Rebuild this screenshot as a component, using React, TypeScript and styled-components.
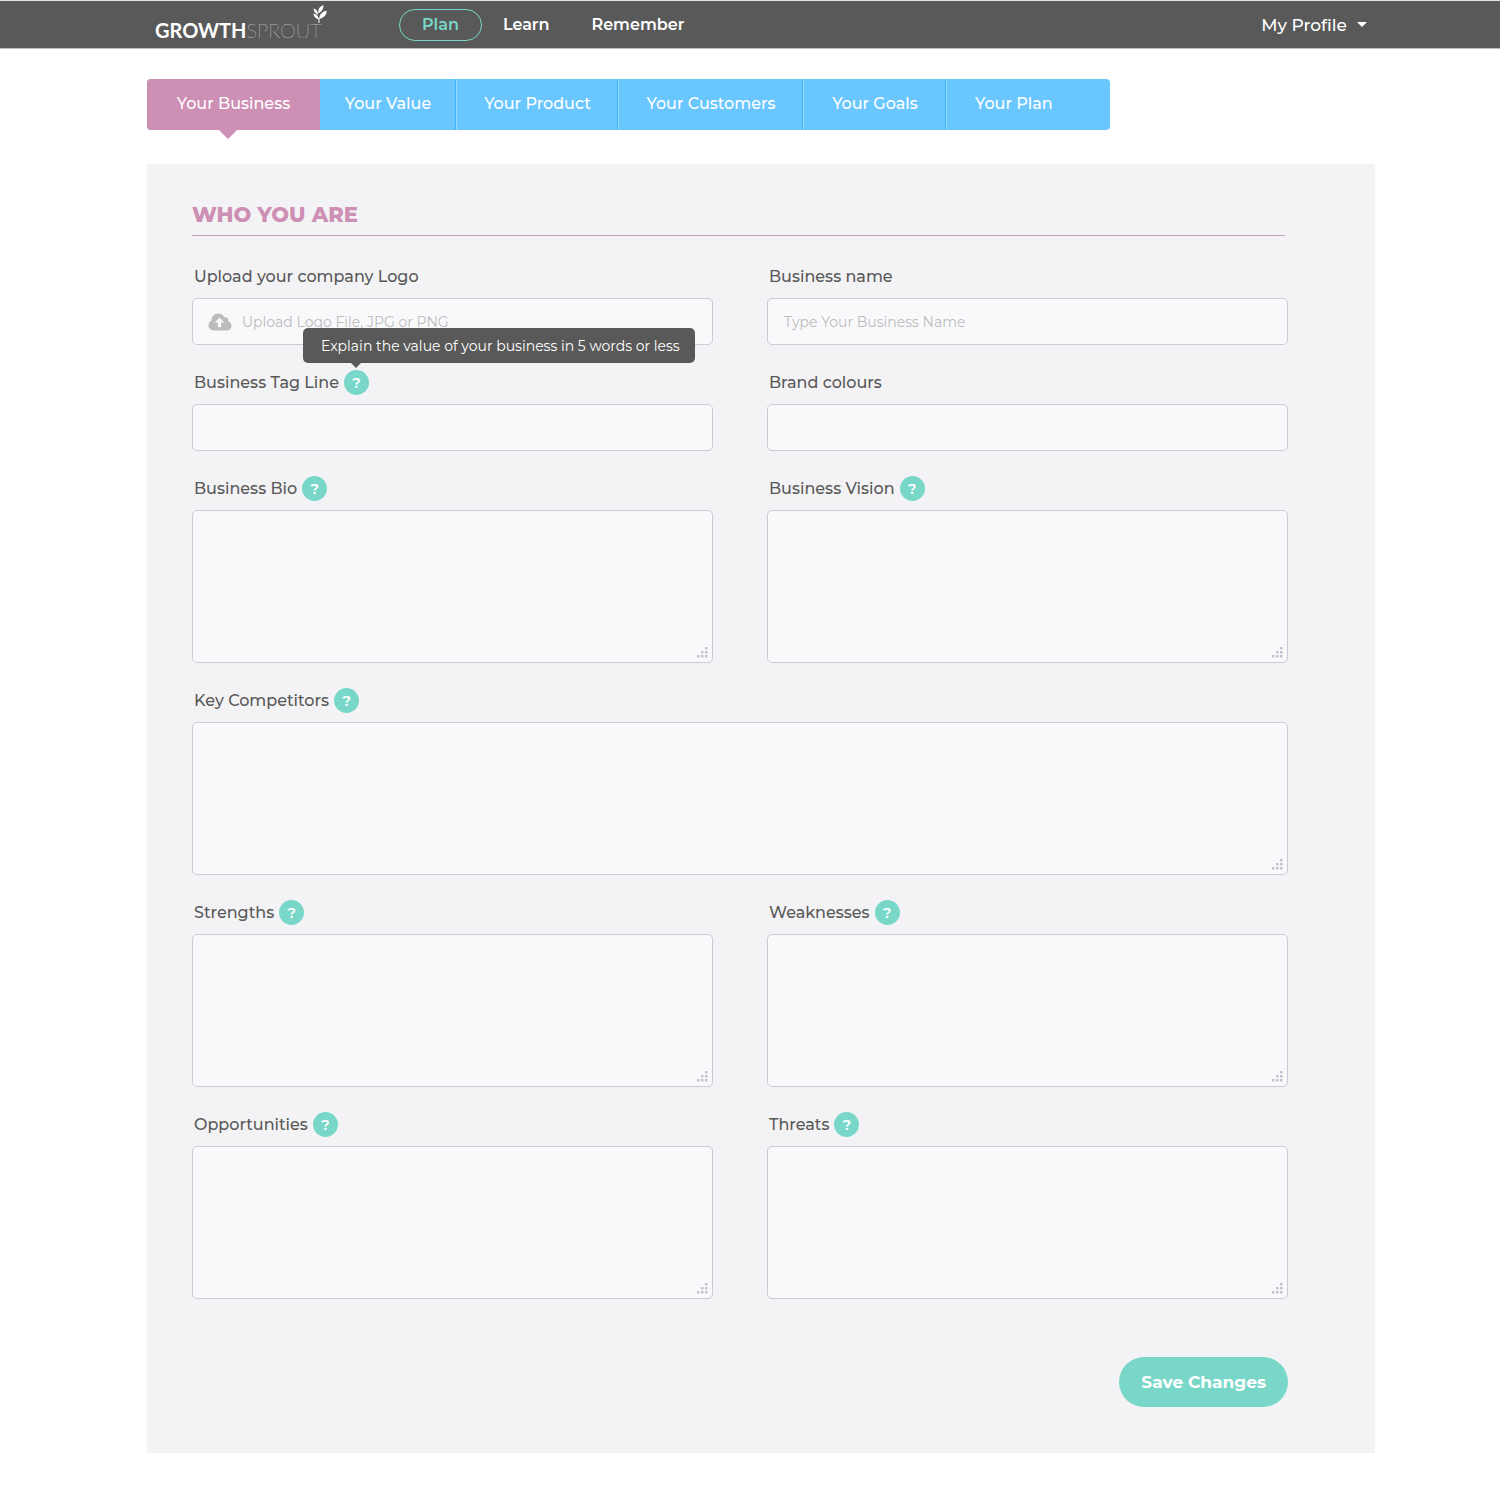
import React, { useState } from "react";
import styled, { createGlobalStyle, css } from "styled-components";

const teal = "#78d7c9";
const pink = "#cd8fb4";
const blue = "#69c6ff";
const charcoal = "#595959";
const fieldLine = "#cbcad8";

const GlobalStyle = createGlobalStyle`
  *, *::before, *::after { box-sizing: border-box; }
  body {
    margin: 0;
    background: #fff;
    color: ${charcoal};
    font-family: Montserrat, Inter, "Noto Sans", sans-serif;
    font-size: 16px;
    line-height: 24px;
  }
  button, input, textarea { font: inherit; color: inherit; }
`;

const Header = styled.header`
  display: flex;
  align-items: center;
  height: 49px;
  padding: 0 133px 0 155px;
  background: ${charcoal};
  border-top: 1px solid #dfe3e2;
  border-bottom: 1px solid #bdbdbd;
  color: #fff;
`;

const Logo = styled.a`
  position: relative;
  display: flex;
  width: 172px;
  margin-right: 72px;
  padding-top: 10px;
  color: #fff;
  font-family: Lato, sans-serif;
  font-size: 20px;
  text-decoration: none;
`;

const LogoBold = styled.span`
  font-weight: 700;
`;

const LogoThin = styled.span`
  color: #fff;
  font-weight: 100;
`;

const Sprout = styled.svg`
  position: absolute;
  top: -3px;
  right: 0;
`;

const Nav = styled.nav`
  display: flex;
  align-items: center;
  flex: 1;
`;

const NavLink = styled.a<{ $active?: boolean }>`
  padding: 3px 20px;
  border: 1px solid transparent;
  border-radius: 16px;
  color: #fff;
  font-weight: 600;
  text-decoration: none;
  ${(p) =>
    p.$active &&
    css`
      padding: 3px 22px;
      border-color: ${teal};
      color: ${teal};
    `}
`;

const ProfileButton = styled.button`
  display: flex;
  align-items: center;
  gap: 10px;
  padding: 0;
  border: 0;
  background: none;
  font-size: 17px;
  font-weight: 500;
`;

const Caret = styled.span`
  border: 5px solid transparent;
  border-top-color: #fff;
  border-bottom: 0;
`;

const Page = styled.main`
  padding: 30px 125px 48px 147px;
`;

const Tabs = styled.nav`
  display: grid;
  grid-template-columns: 173fr 136fr 162fr 185fr 143fr 164fr;
  max-width: 963px;
  border-radius: 4px;
  background: ${blue};
`;

const Tab = styled.a<{ $active?: boolean }>`
  position: relative;
  padding: 13px 0 14px;
  color: #fff;
  font-weight: 500;
  text-align: center;
  text-decoration: none;
  &:nth-child(n + 3) {
    border-left: 1px solid #9ad9ff;
    box-shadow: -1px 0 #41b6fb;
  }
  &:last-child {
    padding-left: 28px;
    text-align: left;
  }
  ${(p) =>
    p.$active &&
    css`
      background: ${pink};
      border-radius: 4px 0 0 4px;
      &::after {
        content: "";
        position: absolute;
        top: 100%;
        left: 72px;
        border: 9px solid transparent;
        border-top-color: ${pink};
        border-bottom: 0;
      }
    `}
`;

const Panel = styled.form`
  margin-top: 34px;
  padding: 39px 87px 46px 45px;
  background: #f3f3f5;
`;

const Title = styled.h1`
  margin: 0 3px 28px 0;
  padding-bottom: 8px;
  border-bottom: 1px solid #c4a3b6;
  color: ${pink};
  font-size: 21px;
  font-weight: 800;
`;

const Fields = styled.div`
  display: grid;
  grid-template-columns: 1fr 1fr;
  gap: 25px 54px;
`;

const Field = styled.div<{ $wide?: boolean }>`
  display: flex;
  flex-direction: column;
  gap: 9px;
  grid-column: ${(p) => (p.$wide ? "1 / -1" : "auto")};
`;

const LabelRow = styled.div`
  display: flex;
  align-items: center;
  gap: 5px;
  height: 25px;
  padding-left: 2px;
  font-weight: 500;
`;

const HelpWrap = styled.span`
  position: relative;
  display: flex;
`;

const Help = styled.button`
  width: 25px;
  height: 25px;
  padding: 0;
  border: 0;
  border-radius: 50%;
  background: ${teal};
  color: #fff;
  font-size: 15px;
  font-weight: 600;
`;

const Tooltip = styled.span`
  position: absolute;
  bottom: 32px;
  left: -41px;
  z-index: 1;
  padding: 6px 15px 5px 18px;
  border-radius: 5px;
  background: ${charcoal};
  color: #fff;
  font-size: 14px;
  font-weight: 400;
  white-space: nowrap;
  &::after {
    content: "";
    position: absolute;
    top: 100%;
    left: 48px;
    border: 5px solid transparent;
    border-top-color: ${charcoal};
    border-bottom: 0;
  }
`;

const box = css`
  width: 100%;
  border: 1px solid ${fieldLine};
  border-radius: 5px;
  background: #f9f9fc;
  font-size: 14px;
`;

const TextInput = styled.input`
  ${box}
  height: 47px;
  padding: 0 16px;
  &::placeholder { color: #bcbcbc; opacity: 1; }
`;

const UploadBox = styled.label`
  ${box}
  display: flex;
  align-items: center;
  gap: 10px;
  height: 47px;
  padding: 0 15px;
  color: #bcbcbc;
`;

const FileInput = styled.input`
  position: absolute;
  width: 1px;
  height: 1px;
  opacity: 0;
`;

const AreaWrap = styled.div`
  position: relative;
  display: flex;
`;

const Area = styled.textarea`
  ${box}
  height: 153px;
  padding: 12px 16px;
  resize: none;
`;

const Grip = styled.svg`
  position: absolute;
  right: 5px;
  bottom: 5px;
  fill: #c3c2cf;
  pointer-events: none;
`;

const Actions = styled.div`
  display: flex;
  justify-content: flex-end;
  margin-top: 58px;
`;

const SaveButton = styled.button`
  height: 50px;
  padding: 0 22px;
  border: 0;
  border-radius: 25px;
  background: ${teal};
  color: #fff;
  font-size: 17px;
  font-weight: 700;
`;

const tabs = ["Your Business", "Your Value", "Your Product", "Your Customers", "Your Goals", "Your Plan"];

const areas = [
  { id: "bio", label: "Business Bio" },
  { id: "vision", label: "Business Vision" },
  { id: "competitors", label: "Key Competitors", wide: true },
  { id: "strengths", label: "Strengths" },
  { id: "weaknesses", label: "Weaknesses" },
  { id: "opportunities", label: "Opportunities" },
  { id: "threats", label: "Threats" },
];

function HelpButton({ about, tip }: { about: string; tip?: string }) {
  return (
    <HelpWrap>
      <Help type="button" aria-label={`Help: ${about}`}>?</Help>
      {tip && <Tooltip role="tooltip">{tip}</Tooltip>}
    </HelpWrap>
  );
}

function AreaField({ id, label, wide }: { id: string; label: string; wide?: boolean }) {
  return (
    <Field $wide={wide}>
      <LabelRow>
        <label htmlFor={id}>{label}</label>
        <HelpButton about={label} />
      </LabelRow>
      <AreaWrap>
        <Area id={id} />
        <Grip width="11" height="11" viewBox="0 0 11 11" aria-hidden="true">
          <path d="M8 0h2.5v2.5H8zM4 4h2.5v2.5H4zM8 4h2.5v2.5H8zM0 8h2.5v2.5H0zM4 8h2.5v2.5H4zM8 8h2.5v2.5H8z" />
        </Grip>
      </AreaWrap>
    </Field>
  );
}

export default function App() {
  const [fileName, setFileName] = useState("");
  return (
    <>
      <GlobalStyle />
      <Header>
        <Logo href="#" aria-label="GrowthSprout">
          <LogoBold>GROWTH</LogoBold>
          <LogoThin>SPROUT</LogoThin>
          <Sprout width="14" height="18" viewBox="0 0 14 18" fill="#fff" aria-hidden="true">
            <path d="M5.400 8.200C4.800 4.500 6.500 1.500 10.300 0C10.800 3.500 9 6.500 5.400 8.200z" />
            <path d="M0.600 3.300C3.400 4.200 5 6.500 5 10C2.400 8.800 0.700 6.500 0.600 3.300z" />
            <path d="M6.200 14C6.400 9.500 9 6.500 13.700 5.800C13.500 10 11 12.800 6.200 14z" />
            <path d="M0.300 8.500C3.500 9 5.500 11 5.900 14.500C2.800 13.900 0.800 11.800 0.300 8.500z" />
            <path d="M5.500 13h1v5h-1z" />
          </Sprout>
        </Logo>
        <Nav aria-label="Main">
          <NavLink href="#plan" $active>Plan</NavLink>
          <NavLink href="#learn">Learn</NavLink>
          <NavLink href="#remember">Remember</NavLink>
        </Nav>
        <ProfileButton type="button">
          My Profile
          <Caret />
        </ProfileButton>
      </Header>
      <Page>
        <Tabs aria-label="Plan sections">
          {tabs.map((tab, i) => (
            <Tab key={tab} href="#" $active={i === 0}>{tab}</Tab>
          ))}
        </Tabs>
        <Panel>
          <Title>WHO YOU ARE</Title>
          <Fields>
            <Field>
              <LabelRow><label htmlFor="logo">Upload your company Logo</label></LabelRow>
              <UploadBox>
                <svg width="24" height="18" viewBox="0 0 24 18" fill="#bcbcbc" aria-hidden="true">
                  <path
                    fillRule="evenodd"
                    d="M6 17.500C2.800 17.500 0.500 15.200 0.500 12.300C0.500 10 1.800 8.300 3.600 7.500C3.300 3.500 6.500 0.500 10.200 0.500C13.200 0.500 15.300 2.100 16.300 4.500C18.800 3.500 20.900 5.600 20.300 8.200C22.200 8.800 23.500 10.500 23.500 12.700C23.500 15.400 21.400 17.500 18.700 17.500zM11.500 4.500L6.800 9.500H9.900V14.300H13.100V9.500H16.200z"
                  />
                </svg>
                <span>{fileName || "Upload Logo File, JPG or PNG"}</span>
                <FileInput
                  id="logo"
                  type="file"
                  accept="image/png, image/jpeg"
                  onChange={(e) => setFileName(e.target.files?.[0]?.name ?? "")}
                />
              </UploadBox>
            </Field>
            <Field>
              <LabelRow><label htmlFor="name">Business name</label></LabelRow>
              <TextInput id="name" type="text" placeholder="Type Your Business Name" />
            </Field>
            <Field>
              <LabelRow>
                <label htmlFor="tagline">Business Tag Line</label>
                <HelpButton about="Business Tag Line" tip="Explain the value of your business in 5 words or less" />
              </LabelRow>
              <TextInput id="tagline" type="text" />
            </Field>
            <Field>
              <LabelRow><label htmlFor="colours">Brand colours</label></LabelRow>
              <TextInput id="colours" type="text" />
            </Field>
            {areas.map((area) => (
              <AreaField key={area.id} {...area} />
            ))}
          </Fields>
          <Actions>
            <SaveButton type="submit">Save Changes</SaveButton>
          </Actions>
        </Panel>
      </Page>
    </>
  );
}
